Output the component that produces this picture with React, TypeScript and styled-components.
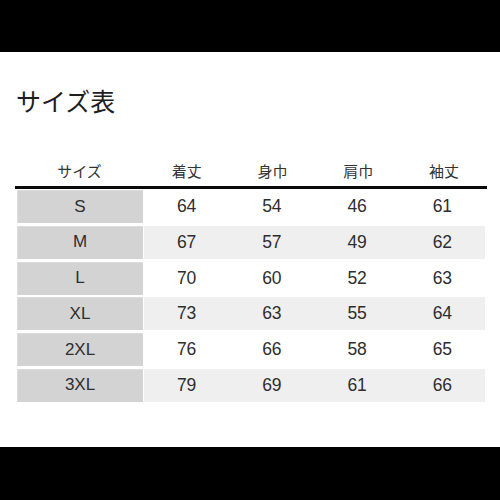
import styled, { createGlobalStyle } from "styled-components";

const GlobalStyle = createGlobalStyle`
    html, body {
        margin: 0;
        padding: 0;
        background: #ffffff;
    }
    body {
        font-family: "Liberation Sans", "Noto Sans CJK JP", sans-serif;
    }
`;

const Page = styled.div`
    width: 500px;
    height: 500px;
    display: flex;
    flex-direction: column;
    background: #ffffff;
    overflow: hidden;
`;

const Bar = styled.div<{ $h: number }>`
    height: ${(p) => p.$h}px;
    background: #000000;
    flex-shrink: 0;
`;

const Content = styled.div`
    flex: 1;
    padding: 33px 0 0 15px;
`;

const Title = styled.h1`
    margin: 0 0 0 1px;
    font-family: "Noto Sans CJK JP", sans-serif;
    font-weight: 400;
    font-size: 25px;
    line-height: 30px;
    color: #1e1e1e;
`;

const Table = styled.div`
    margin-top: 43px;
    width: 472px;
`;

const Head = styled.div`
    display: grid;
    grid-template-columns: 129px repeat(4, 1fr);
    height: 28px;
    align-items: center;
    border-bottom: 3px solid #0a0a0a;
    font-family: "Noto Sans CJK JP", sans-serif;
    font-size: 15px;
    color: #333333;
`;

const HeadCell = styled.div`
    text-align: center;
    padding-bottom: 4px;
`;

const Body = styled.div`
    display: flex;
    flex-direction: column;
    gap: 2.8px;
    padding-top: 1px;
`;

const Row = styled.div`
    display: grid;
    grid-template-columns: 127px repeat(4, 1fr);
    height: 33px;
    margin-left: 2px;
    margin-right: 2px;
`;

const SizeCell = styled.div`
    display: flex;
    align-items: center;
    justify-content: center;
    margin-right: 1px;
    background: #d3d3d3;
    box-shadow: inset 1px 1px 0 #dcdcdc;
    font-size: 17px;
    color: #2e2e2e;
`;

const ValueCell = styled.div<{ $shade: boolean }>`
    display: flex;
    align-items: center;
    justify-content: center;
    background: ${(p) => (p.$shade ? "#efefef" : "#ffffff")};
    font-size: 17.5px;
    color: #2e2e2e;
`;

const headers = ["サイズ", "着丈", "身巾", "肩巾", "袖丈"];

const rows: [string, number, number, number, number][] = [
    ["S", 64, 54, 46, 61],
    ["M", 67, 57, 49, 62],
    ["L", 70, 60, 52, 63],
    ["XL", 73, 63, 55, 64],
    ["2XL", 76, 66, 58, 65],
    ["3XL", 79, 69, 61, 66],
];

export default function App() {
    return (
        <Page>
            <GlobalStyle />
            <Bar $h={52} />
            <Content>
                <Title>サイズ表</Title>
                <Table>
                    <Head>
                        {headers.map((h) => (
                            <HeadCell key={h}>{h}</HeadCell>
                        ))}
                    </Head>
                    <Body>
                        {rows.map((r, i) => (
                            <Row key={r[0]}>
                                <SizeCell>{r[0]}</SizeCell>
                                {r.slice(1).map((v, j) => (
                                    <ValueCell key={j} $shade={i % 2 === 1}>
                                        {v}
                                    </ValueCell>
                                ))}
                            </Row>
                        ))}
                    </Body>
                </Table>
            </Content>
            <Bar $h={53} />
        </Page>
    );
}
